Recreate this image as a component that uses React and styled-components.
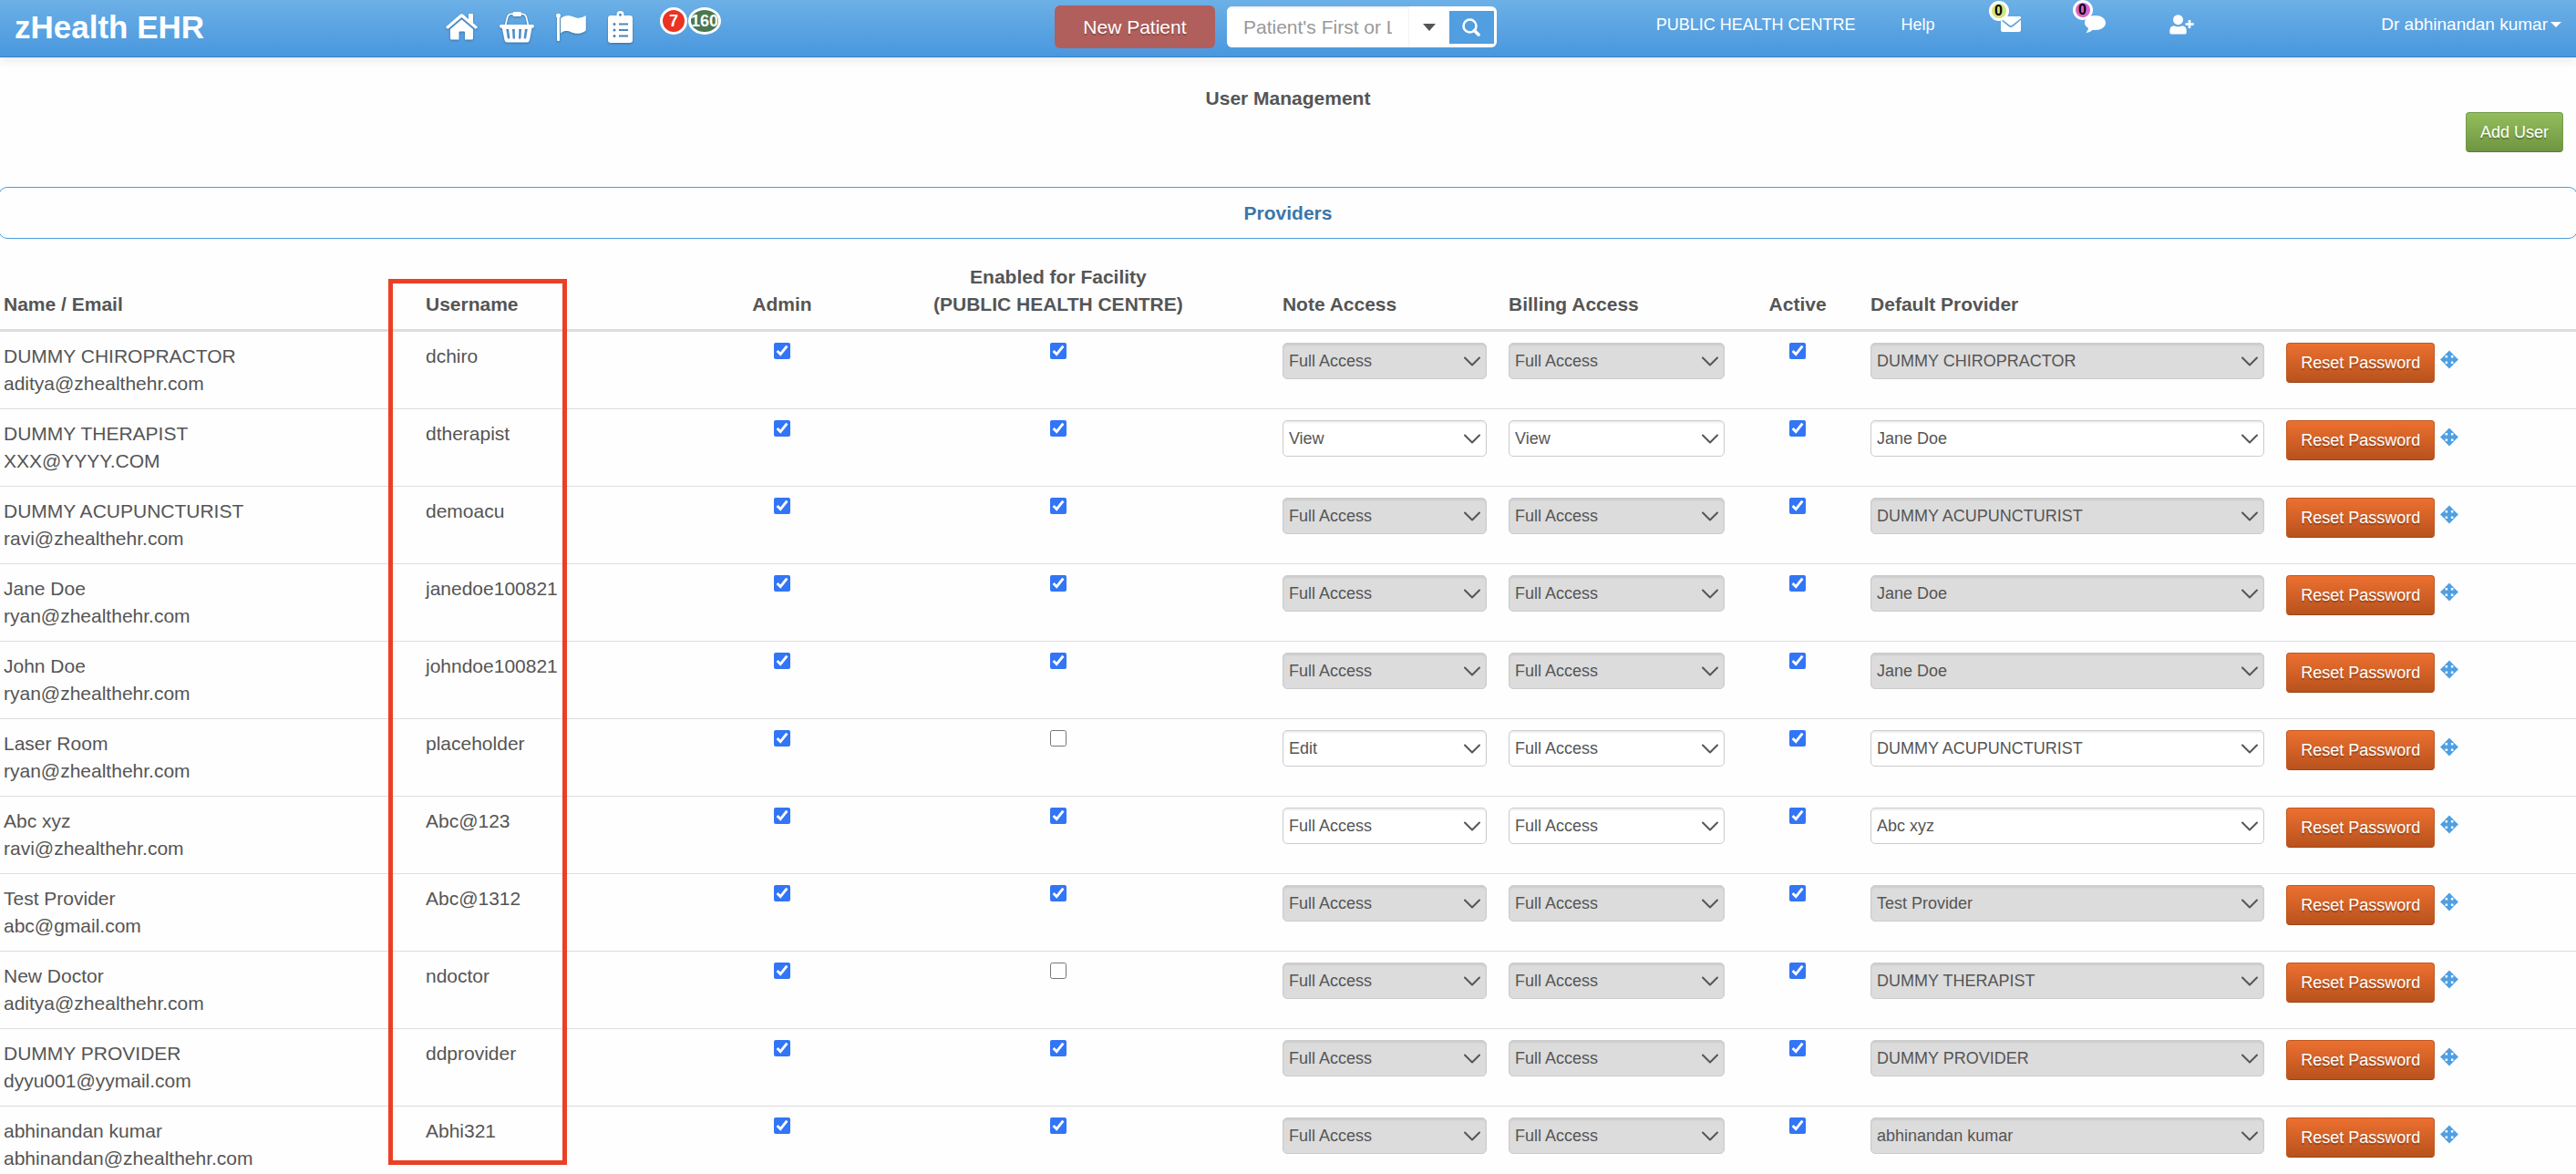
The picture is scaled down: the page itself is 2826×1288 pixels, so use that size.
import React, { useState } from "react";
import styled, { createGlobalStyle } from "styled-components";

const GlobalStyle = createGlobalStyle`
  * {
    box-sizing: border-box;
  }

  body {
    margin: 0;
    background-color: #fefefe;
    color: #555;
    font-family: "Helvetica Neue", "Liberation Sans", Arial, sans-serif;
    font-size: 21px;
    line-height: 30px;
  }

  button,
  input,
  select {
    font-family: inherit;
  }
`;

const HeaderWrap = styled.header`
  display: grid;
  grid-template-columns: 17.3% 23.64% 23.35% 1fr;
  align-items: center;
  height: 63px;
  padding-bottom: 3px;
  border-bottom: 1px solid #3d84c6;
  background-image: linear-gradient(#6cb0e6, #4997de);
  box-shadow: 0 1px 12px rgba(0, 0, 0, 0.12);
`;

const Logo = styled.a`
  padding-left: 16px;
  color: #fff;
  font-size: 35px;
  font-weight: bold;
  text-decoration: none;
`;

const Tools = styled.nav`
  display: flex;
  align-items: center;
  gap: 24px;
  height: 100%;

  a {
    display: flex;
  }

  svg {
    fill: #fff;
    filter: drop-shadow(0 1px 1px rgba(0, 0, 0, 0.3));
  }
`;

const Counters = styled.div`
  display: flex;
  align-self: flex-start;
  gap: 1px;
  padding-top: 8px;
  margin-left: 6px;
`;

const Counter = styled.span`
  display: flex;
  align-items: center;
  justify-content: center;
  width: ${(props) => props.$width};
  height: 30px;
  border: 3px solid #fff;
  border-radius: 50%;
  background-color: ${(props) => props.$color};
  color: #fff;
  font-size: 18px;
  font-weight: bold;
  overflow: hidden;
`;

const SearchArea = styled.div`
  display: flex;
  align-items: center;
  gap: 13px;
`;

const NewPatientButton = styled.button`
  width: 176px;
  height: 47px;
  border: none;
  border-radius: 6px;
  background-color: #b05f5c;
  color: #fff;
  font-size: 21px;
  text-shadow: 0 2px 1px rgba(0, 0, 0, 0.2);
  cursor: pointer;
`;

const SearchForm = styled.form`
  display: flex;
  align-items: center;
  width: 296px;
  height: 45px;
  padding-right: 3px;
  border-radius: 6px;
  background-color: #fff;
  overflow: hidden;

  input {
    width: 200px;
    height: 45px;
    padding: 0 18px;
    border: none;
    border-right: 1px solid #f4f4f4;
    color: #555;
    font-size: 21px;
    box-shadow: inset 0 2px 2px rgba(0, 0, 0, 0.06);

    &::placeholder {
      color: #999;
    }
  }
`;

const SearchOptions = styled.button`
  display: flex;
  align-items: center;
  justify-content: center;
  width: 44px;
  height: 45px;
  padding: 0;
  border: none;
  background-color: #fff;
`;

const SearchSubmit = styled.button`
  display: flex;
  align-items: center;
  justify-content: center;
  width: 49px;
  height: 36px;
  padding: 0;
  border: none;
  background-color: #519ee1;
`;

const AccountArea = styled.nav`
  display: flex;
  align-items: center;
  gap: 50px;
  padding: 0 16px 6px 0;
  font-size: 18px;

  a {
    color: #fff;
    text-decoration: none;
  }
`;

const Alerts = styled.div`
  display: flex;
  align-items: center;
  gap: 70px;
  margin-left: 22px;

  a {
    position: relative;
    display: flex;
  }

  svg {
    fill: #fff;
  }
`;

const AlertCount = styled.span`
  position: absolute;
  top: -17px;
  left: -13px;
  display: flex;
  align-items: center;
  justify-content: center;
  width: 22px;
  height: 22px;
  border: 3px solid #fff;
  border-radius: 50%;
  background-color: ${(props) => props.$color};
  color: #000;
  font-size: 16px;
  font-weight: bold;
`;

const AccountMenu = styled.button`
  display: flex;
  align-items: center;
  gap: 3px;
  margin-left: auto;
  padding: 0;
  border: none;
  background: none;
  color: #fff;
  font-size: 19px;
`;

const Main = styled.main`
  padding-top: 30px;
  overflow: hidden;
`;

const Title = styled.h1`
  margin: 0;
  font-size: 21px;
  text-align: center;
`;

const Actions = styled.div`
  display: flex;
  justify-content: flex-end;
  padding: 0 14px 38px;
`;

const ActionButton = styled.button`
  height: 44px;
  padding: 0 15px;
  border: 1px solid ${(props) => (props.$green ? "#729a45" : "#bf5821")};
  border-bottom-color: ${(props) => (props.$green ? "#5c7d37" : "#9c4518")};
  border-radius: 4px;
  background-image: ${(props) =>
    props.$green
      ? "linear-gradient(#93be5b, #6f9541)"
      : "linear-gradient(#ec7030, #b8521d)"};
  color: #fff;
  font-size: 18px;
  white-space: nowrap;
  text-shadow: 0 2px 1px rgba(0, 0, 0, 0.25);
  cursor: pointer;
`;

const SectionTitle = styled.h2`
  display: flex;
  align-items: center;
  justify-content: center;
  height: 57px;
  margin: 0 -2px 15px;
  border: 1px solid #4c9cdb;
  border-radius: 10px;
  color: #3b76a8;
  font-size: 21px;
`;

const TableWrap = styled.div`
  position: relative;
`;

const Highlight = styled.div`
  position: absolute;
  top: 29px;
  bottom: 20px;
  left: calc(16.1% - 29px);
  width: 196px;
  border: 5px solid #ea4025;
  pointer-events: none;
`;

const Table = styled.table`
  width: 100%;
  border-collapse: separate;
  border-spacing: 0;
  table-layout: fixed;

  th,
  td {
    padding: 12px;
    text-align: left;
  }

  th {
    border-bottom: 2px solid #ddd;
    vertical-align: bottom;
  }

  td {
    border-top: 1px solid #ddd;
    vertical-align: top;
    white-space: nowrap;
  }

  th:first-child,
  td:first-child {
    padding-left: 4px;
  }

  .centered {
    text-align: center;
  }
`;

const Checkbox = styled.input`
  display: block;
  width: 18px;
  height: 18px;
  margin: 0 auto;
  accent-color: #3275f6;
`;

const SelectWrap = styled.div`
  position: relative;

  select {
    display: block;
    width: 100%;
    height: 40px;
    padding: 0 32px 0 6px;
    border: 1px solid #ccc;
    border-radius: 5px;
    appearance: none;
    background-color: #fff;
    color: #555;
    font-size: 18px;
    box-shadow: inset 0 2px 2px rgba(0, 0, 0, 0.07);

    &:disabled {
      background-color: #dcdcdc;
      opacity: 1;
    }
  }

  svg {
    position: absolute;
    top: 15px;
    right: 7px;
    fill: none;
    stroke: #555;
    stroke-width: 2;
    stroke-linecap: round;
    stroke-linejoin: round;
    pointer-events: none;
  }
`;

const RowActions = styled.div`
  display: flex;
  align-items: flex-start;
  gap: 6px;
`;

const MoveButton = styled.button`
  display: flex;
  padding: 0;
  margin-top: 8px;
  border: none;
  background: none;
  cursor: move;

  svg {
    fill: #4f9fe2;
  }
`;

const HomeIcon = () => (
  <svg width="35" height="29" viewBox="0 0 35 29">
    <path d="M16 0.800Q17.500 -0.400 19 0.800L25 6V0.800Q25 0 25.800 0H29.200Q30 0 30 0.800V10.300L34.600 14.300Q35 14.800 34.600 15.300L33.300 16.500Q32.800 16.800 32.300 16.400L17.500 4 2.700 16.400Q2.200 16.800 1.700 16.500L0.400 15.300Q0 14.800 0.400 14.300Z" />
    <path d="M17.500 6.500 30 17V27Q30 28.500 28.500 28.500H21V20.500Q21 19.500 20 19.500H15.500Q14.500 19.500 14.500 20.500V28.500H6.500Q5 28.500 5 27V17Z" />
  </svg>
);

const BasketIcon = () => (
  <svg width="38" height="34" viewBox="0 0 38 34">
    <path
      d="M6.500 15 8.500 6.500Q9.500 2.500 13 2.300H25Q28.500 2.500 29.500 6.500L31.500 15"
      fill="none"
      stroke="#fff"
      strokeWidth="1.600"
    />
    <rect x="14.500" y="0" width="9.500" height="5" rx="1.500" />
    <path
      fillRule="evenodd"
      d="M2 14H36Q38 14 38 15.800T36 17.800H35.500L33 31Q32.500 33.500 30 33.500H8.500Q6 33.500 5.500 31L2.800 17.800H2Q0 17.800 0 15.800T2 14ZM7.300 19 8.700 28.500Q9 29.800 10.300 29.500T11.300 28L10 19ZM14 19 14.500 28.500Q14.600 29.700 15.800 29.700T17 28.500L16.700 19ZM21.300 19 21 28.500Q21 29.700 22.200 29.700T23.500 28.500L24 19ZM28 19 26.700 28Q26.600 29.300 27.700 29.500T29.200 28.500L30.700 19Z"
    />
  </svg>
);

const FlagIcon = () => (
  <svg width="33" height="32" viewBox="0 0 33 32">
    <circle cx="2.500" cy="3.300" r="2.500" />
    <rect x="1" y="5" width="3" height="26" rx="1" />
    <path d="M5 6Q10 2.300 15 3.200C20 4 22 6.500 26 5.500Q29 5 32.800 3V19.500Q28 23.300 22 22.800C17 22 15 19.500 10 20Q7.500 20.300 5 22.500Z" />
  </svg>
);

const ClipboardIcon = () => (
  <svg width="27" height="36" viewBox="0 0 27 36">
    <path
      fillRule="evenodd"
      d="M3 5H9.500V4A4 4 0 0 1 17.500 4V5H24Q27 5 27 8V32Q27 35 24 35H3Q0 35 0 32V8Q0 5 3 5ZM13.500 2.700A1.500 1.500 0 1 0 13.500 5.700 1.500 1.500 0 0 0 13.500 2.700ZM12 13.500V15.500H22V13.500ZM12 20V22H22V20ZM12 26.500V28.500H22V26.500ZM7 13A1.500 1.500 0 1 0 7 16 1.500 1.500 0 0 0 7 13ZM7 19.500A1.500 1.500 0 1 0 7 22.500 1.500 1.500 0 0 0 7 19.500ZM7 26A1.500 1.500 0 1 0 7 29 1.500 1.500 0 0 0 7 26Z"
    />
  </svg>
);

const MailIcon = () => (
  <svg width="22" height="17" viewBox="0 0 22 17">
    <path d="M1 0H21Q22 0 22 1V2L12.500 9.500Q11 10.700 9.500 9.500L0 2V1Q0 0 1 0Z" />
    <path d="M0 4 8.800 11.200Q11 12.800 13.200 11.200L22 4V15Q22 17 20 17H2Q0 17 0 15Z" />
  </svg>
);

const ChatIcon = () => (
  <svg width="23" height="19" viewBox="0 0 23 19">
    <path d="M11.500 0C18 0 23 3.500 23 8S18 16 11.500 16Q10 16 8.700 15.700 6 18.700 2 19 1.300 19 2 18.200 3.800 16.500 4 13.800 0 11.500 0 8C0 3.500 5 0 11.500 0Z" />
  </svg>
);

const AddContactIcon = () => (
  <svg width="27" height="22" viewBox="0 0 27 22">
    <circle cx="9.500" cy="5.700" r="5.500" />
    <path d="M5 12.200Q7 13.200 9.500 13.200T14 12.200Q18.700 12.800 18.700 17.500V19.500Q18.700 21.500 17 21.500H2Q0.300 21.500 0.300 19.500V17.500Q0.300 12.800 5 12.200ZM20.700 6H23.300V9.200H26.700V11.800H23.300V15H20.700V11.800H17.500V9.200H20.700Z" />
  </svg>
);

const MoveIcon = () => (
  <svg width="20" height="21" viewBox="0 0 20 20">
    <path d="M10 0 15.300 5.600H11.900V8.100H14.400V4.700L20 10 14.400 15.300V11.900H11.900V14.400H15.300L10 20 4.700 14.400H8.100V11.900H5.600V15.300L0 10 5.600 4.700V8.100H8.100V5.600H4.700Z" />
  </svg>
);

const users = [
  { name: "DUMMY CHIROPRACTOR", email: "aditya@zhealthehr.com", username: "dchiro", facility: true, note: "Full Access", billing: "Full Access", provider: "DUMMY CHIROPRACTOR", locked: true },
  { name: "DUMMY THERAPIST", email: "XXX@YYYY.COM", username: "dtherapist", facility: true, note: "View", billing: "View", provider: "Jane Doe", locked: false },
  { name: "DUMMY ACUPUNCTURIST", email: "ravi@zhealthehr.com", username: "demoacu", facility: true, note: "Full Access", billing: "Full Access", provider: "DUMMY ACUPUNCTURIST", locked: true },
  { name: "Jane Doe", email: "ryan@zhealthehr.com", username: "janedoe100821", facility: true, note: "Full Access", billing: "Full Access", provider: "Jane Doe", locked: true },
  { name: "John Doe", email: "ryan@zhealthehr.com", username: "johndoe100821", facility: true, note: "Full Access", billing: "Full Access", provider: "Jane Doe", locked: true },
  { name: "Laser Room", email: "ryan@zhealthehr.com", username: "placeholder", facility: false, note: "Edit", billing: "Full Access", provider: "DUMMY ACUPUNCTURIST", locked: false },
  { name: "Abc xyz", email: "ravi@zhealthehr.com", username: "Abc@123", facility: true, note: "Full Access", billing: "Full Access", provider: "Abc xyz", locked: false },
  { name: "Test Provider", email: "abc@gmail.com", username: "Abc@1312", facility: true, note: "Full Access", billing: "Full Access", provider: "Test Provider", locked: true },
  { name: "New Doctor", email: "aditya@zhealthehr.com", username: "ndoctor", facility: false, note: "Full Access", billing: "Full Access", provider: "DUMMY THERAPIST", locked: true },
  { name: "DUMMY PROVIDER", email: "dyyu001@yymail.com", username: "ddprovider", facility: true, note: "Full Access", billing: "Full Access", provider: "DUMMY PROVIDER", locked: true },
  { name: "abhinandan kumar", email: "abhinandan@zhealthehr.com", username: "Abhi321", facility: true, note: "Full Access", billing: "Full Access", provider: "abhinandan kumar", locked: true },
];

const accessLevels = ["Full Access", "Edit", "View"];
const providers = users.map((user) => user.name);

const Select = ({ label, value, options, disabled }) => (
  <SelectWrap>
    <select aria-label={label} defaultValue={value} disabled={disabled}>
      {options.map((option) => (
        <option key={option}>{option}</option>
      ))}
    </select>
    <svg width="18" height="11" viewBox="0 0 18 11">
      <path d="M1 1.500 9 9.500 17 1.500" />
    </svg>
  </SelectWrap>
);

const Header = () => {
  const [query, setQuery] = useState("");

  return (
    <HeaderWrap>
      <Logo href="#">zHealth EHR</Logo>
      <Tools>
        <a href="#home" aria-label="Home">
          <HomeIcon />
        </a>
        <a href="#store" aria-label="Store">
          <BasketIcon />
        </a>
        <a href="#flags" aria-label="Flags">
          <FlagIcon />
        </a>
        <a href="#tasks" aria-label="Tasks">
          <ClipboardIcon />
        </a>
        <Counters>
          <Counter $width="30px" $color="#ea3323">7</Counter>
          <Counter $width="36px" $color="#4a7750">160</Counter>
        </Counters>
      </Tools>
      <SearchArea>
        <NewPatientButton type="button">New Patient</NewPatientButton>
        <SearchForm onSubmit={(e) => e.preventDefault()}>
          <input
            type="text"
            aria-label="Patient search"
            placeholder="Patient's First or Last Name"
            value={query}
            onChange={(e) => setQuery(e.target.value)}
          />
          <SearchOptions type="button" aria-label="Search options">
            <svg width="14" height="8" viewBox="0 0 14 8">
              <path d="M0 0H14L7 8Z" fill="#555" />
            </svg>
          </SearchOptions>
          <SearchSubmit type="submit" aria-label="Search">
            <svg width="20" height="20" viewBox="0 0 20 20" fill="none" stroke="#fff">
              <circle cx="8.500" cy="8.500" r="7" strokeWidth="2.600" />
              <path d="M13.500 13.500 18 18" strokeWidth="3.600" strokeLinecap="round" />
            </svg>
          </SearchSubmit>
        </SearchForm>
      </SearchArea>
      <AccountArea>
        <a href="#facility">PUBLIC HEALTH CENTRE</a>
        <a href="#help">Help</a>
        <Alerts>
          <a href="#mail" aria-label="Mail">
            <MailIcon />
            <AlertCount $color="#d3e37b">0</AlertCount>
          </a>
          <a href="#chat" aria-label="Chat">
            <ChatIcon />
            <AlertCount $color="#d964c9">0</AlertCount>
          </a>
          <a href="#contacts" aria-label="Add contact">
            <AddContactIcon />
          </a>
        </Alerts>
        <AccountMenu type="button">
          Dr abhinandan kumar
          <svg width="12" height="6" viewBox="0 0 12 6">
            <path d="M0 0H12L6 6Z" fill="#fff" />
          </svg>
        </AccountMenu>
      </AccountArea>
    </HeaderWrap>
  );
};

const UserRow = ({ user }) => (
  <tr>
    <td>
      {user.name}
      <br />
      {user.email}
    </td>
    <td>{user.username}</td>
    <td>
      <Checkbox type="checkbox" aria-label="Admin" defaultChecked />
    </td>
    <td>
      <Checkbox
        type="checkbox"
        aria-label="Enabled for Facility"
        defaultChecked={user.facility}
      />
    </td>
    <td>
      <Select
        label="Note Access"
        value={user.note}
        options={accessLevels}
        disabled={user.locked}
      />
    </td>
    <td>
      <Select
        label="Billing Access"
        value={user.billing}
        options={accessLevels}
        disabled={user.locked}
      />
    </td>
    <td>
      <Checkbox type="checkbox" aria-label="Active" defaultChecked />
    </td>
    <td>
      <Select
        label="Default Provider"
        value={user.provider}
        options={providers}
        disabled={user.locked}
      />
    </td>
    <td>
      <RowActions>
        <ActionButton type="button">Reset Password</ActionButton>
        <MoveButton type="button" aria-label="Move">
          <MoveIcon />
        </MoveButton>
      </RowActions>
    </td>
  </tr>
);

const App = () => (
  <>
    <GlobalStyle />
    <Header />
    <Main>
      <Title>User Management</Title>
      <Actions>
        <ActionButton type="button" $green>
          Add User
        </ActionButton>
      </Actions>
      <SectionTitle>Providers</SectionTitle>
      <TableWrap>
        <Table>
          <colgroup>
            <col width="16.1%" />
            <col width="11.82%" />
            <col width="4.88%" />
            <col width="16.56%" />
            <col width="8.78%" />
            <col width="9.24%" />
            <col width="4.81%" />
            <col width="16.14%" />
            <col width="11.67%" />
          </colgroup>
          <thead>
            <tr>
              <th>Name / Email</th>
              <th>Username</th>
              <th className="centered">Admin</th>
              <th className="centered">
                Enabled for Facility
                <br />
                (PUBLIC HEALTH CENTRE)
              </th>
              <th>Note Access</th>
              <th>Billing Access</th>
              <th className="centered">Active</th>
              <th>Default Provider</th>
              <th aria-label="Actions" />
            </tr>
          </thead>
          <tbody>
            {users.map((user) => (
              <UserRow key={user.username} user={user} />
            ))}
          </tbody>
        </Table>
        <Highlight />
      </TableWrap>
    </Main>
  </>
);

export default App;
